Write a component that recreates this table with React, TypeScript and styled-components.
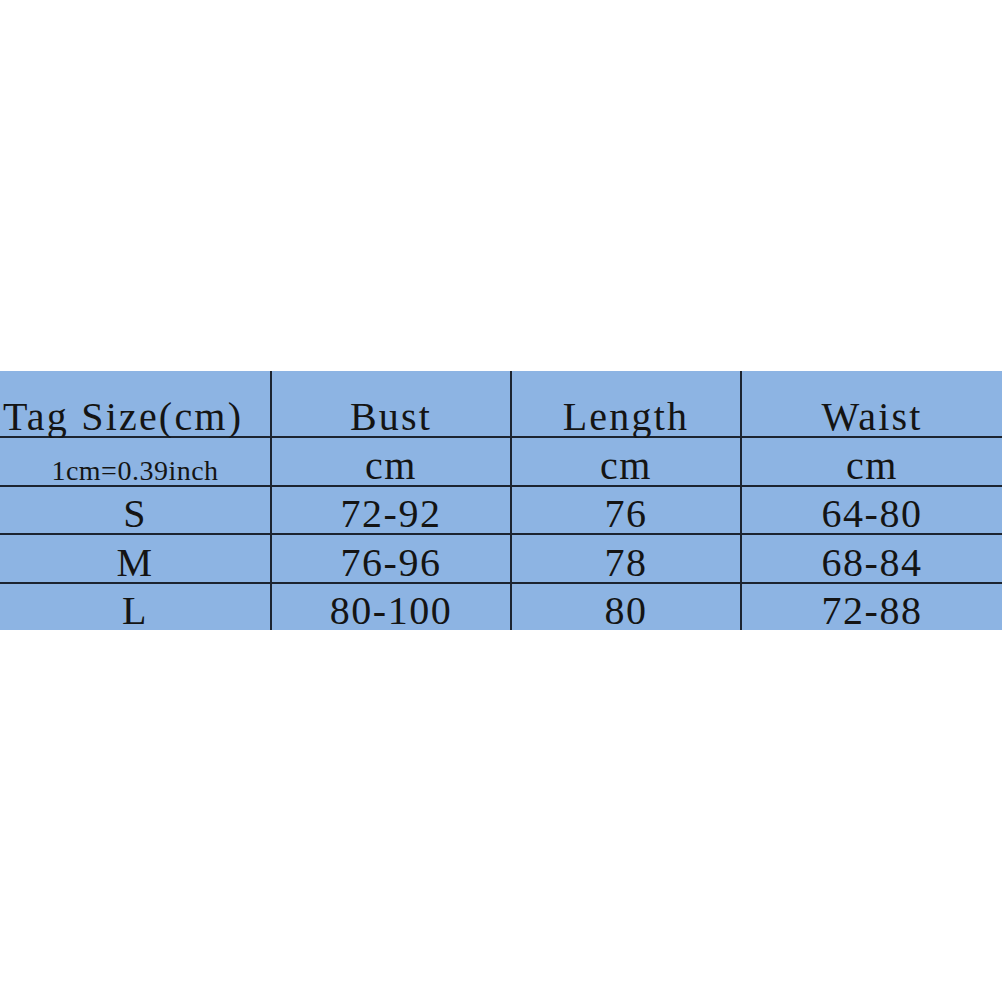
import React from "react";
import styled, { createGlobalStyle } from "styled-components";

const GlobalStyle = createGlobalStyle`
  html, body { margin: 0; padding: 0; background: #ffffff; }
  body { font-family: "Liberation Serif", "Times New Roman", serif; }
`;

const Page = styled.div`
  height: 1002px;
  width: 1002px;
  display: flex;
  align-items: center;
`;

const Table = styled.div`
  width: 1002px;
  display: grid;
  grid-template-columns: 270px 238px 228px 260px;
  grid-template-rows: 65px 47px 46px 47px 46px;
  gap: 2px;
  background: #1c2430;
  margin-top: -1px;
`;

const Cell = styled.div<{ $small?: boolean; $left?: boolean; $head?: boolean }>`
  background: #8db4e3;
  color: #141414;
  display: flex;
  align-items: flex-end;
  justify-content: ${(p) => (p.$left ? "flex-start" : "center")};
  padding-left: ${(p) => (p.$left ? "3px" : "0")};
  font-family: "Liberation Serif", "Times New Roman", serif;
  font-size: ${(p) => (p.$small ? "28px" : "40px")};
  line-height: ${(p) => (p.$small ? "29px" : "38px")};
  letter-spacing: ${(p) => (p.$small ? "0.5px" : p.$head ? "2.2px" : "1.5px")};
  white-space: nowrap;
`;

const rows: string[][] = [
  ["S", "72-92", "76", "64-80"],
  ["M", "76-96", "78", "68-84"],
  ["L", "80-100", "80", "72-88"],
];

export default function App() {
  return (
    <>
      <GlobalStyle />
      <Page>
        <Table>
          <Cell $left $head>Tag Size(cm)</Cell>
          <Cell $head>Bust</Cell>
          <Cell $head>Length</Cell>
          <Cell $head>Waist</Cell>
          <Cell $small>1cm=0.39inch</Cell>
          <Cell>cm</Cell>
          <Cell>cm</Cell>
          <Cell>cm</Cell>
          {rows.map((r) =>
            r.map((v, i) => <Cell key={r[0] + i}>{v}</Cell>)
          )}
        </Table>
      </Page>
    </>
  );
}
